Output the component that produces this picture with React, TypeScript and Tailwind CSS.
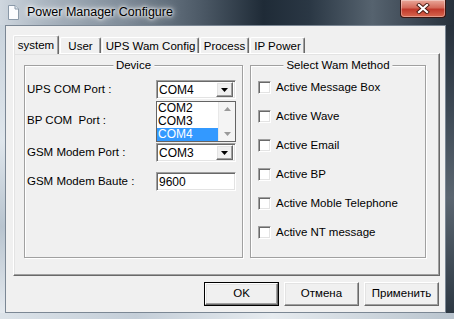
import React from "react";

const raised =
  "border border-t-white border-l-white border-b-[#696969] border-r-[#696969] shadow-[inset_-1px_-1px_0_#a0a0a0,inset_1px_1px_0_#e3e3e3] bg-[#f0f0f0]";
const sunken =
  "border border-t-[#a0a0a0] border-l-[#a0a0a0] border-b-white border-r-white shadow-[inset_1px_1px_0_#696969,inset_-1px_-1px_0_#e3e3e3] bg-white";

function Arrow({ color = "#000" }: { color?: string }) {
  return (
    <svg width="7" height="4" viewBox="0 0 7 4">
      <path d="M0 0H7L3.5 4Z" fill={color} />
    </svg>
  );
}

function Combo({ value }: { value: string }) {
  return (
    <div className={`${sunken} w-[80px] h-[19px] flex items-center pl-[2px] pr-[2px]`}>
      <span className="flex-1 text-[12px] leading-none text-black">{value}</span>
      <div className={`${raised} w-[17px] h-[15px] flex items-center justify-center`}>
        <Arrow />
      </div>
    </div>
  );
}

function Check({ label }: { label: string }) {
  return (
    <div className="flex items-center h-[13px]">
      <div className={`${sunken} w-[13px] h-[13px]`} />
      <span className="ml-[5px] text-[11.5px] leading-none text-black">{label}</span>
    </div>
  );
}

function Group({ title, className, children }: { title: string; className: string; children?: React.ReactNode }) {
  return (
    <div className={`relative border border-[#a0a0a0] shadow-[inset_1px_1px_0_#fff,1px_1px_0_#fff] ${className}`}>
      <span className="absolute left-1/2 -translate-x-1/2 -top-[8px] px-[3px] bg-[#f0f0f0] text-[11.5px] leading-[14px] text-black whitespace-nowrap">
        {title}
      </span>
      {children}
    </div>
  );
}

function Btn({ label, def }: { label: string; def?: boolean }) {
  if (def) {
    return (
      <div className="w-[75px] h-[24px] border border-black flex">
        <div className={`${raised} flex-1 flex items-center justify-center text-[11.5px] text-black`}>{label}</div>
      </div>
    );
  }
  return (
    <div className={`${raised} w-[75px] h-[24px] flex items-center justify-center text-[11.5px] text-black`}>{label}</div>
  );
}

export default function App() {
  const tabs = [
    { label: "User", w: "w-[41px]" },
    { label: "UPS Wam Config", w: "w-[97px]" },
    { label: "Process", w: "w-[49px]" },
    { label: "IP Power", w: "w-[55px]" },
  ];
  return (
    <div className="w-[454px] h-[319px] overflow-hidden flex flex-col font-['Liberation_Sans',Arial,sans-serif] bg-[#3a4654]">
      {/* title bar */}
      <div className="h-[25px] flex items-start bg-[linear-gradient(90deg,#cfd7df_0%,#aab5c0_10%,#7d8a97_28%,#4a5764_45%,#1f2b37_58%,#2a3744_68%,#56636f_82%,#3b4652_92%,#27313c_100%)]">
        <svg className="ml-[8px] mt-[5px]" width="11" height="15" viewBox="0 0 11 15">
          <path d="M0.5 0.5H7L10.5 4V14.5H0.5Z" fill="#fbfcfe" stroke="#8a99a8" />
          <path d="M7 0.5V4H10.5" fill="#dfe6ee" stroke="#8a99a8" />
        </svg>
        <span className="ml-[8px] mt-[5px] text-[12.5px] leading-[15px] text-black [text-shadow:0_0_5px_#fff,0_0_8px_#fff,0_0_3px_#fff]">
          Power Manager Configure
        </span>
        <div className="ml-auto mr-[8px] w-[46px] h-[18px] rounded-b-[4px] border border-[#3b1510] border-t-0 bg-[linear-gradient(180deg,#e9a89a_0%,#d46a5a_45%,#c0392b_55%,#d8674f_100%)] shadow-[inset_0_0_0_1px_rgba(255,255,255,0.35)] flex items-center justify-center">
          <svg width="14" height="11" viewBox="0 0 14 11">
            <path d="M3 2L11 9M11 2L3 9" stroke="#4a1a12" strokeWidth="4" strokeLinecap="square" />
            <path d="M3 2L11 9M11 2L3 9" stroke="#fff" strokeWidth="2.2" strokeLinecap="square" />
          </svg>
        </div>
      </div>

      {/* middle */}
      <div className="h-[288px] flex">
        <div className="w-[5px] bg-[linear-gradient(180deg,#c9d3dc,#dfe6ec_40%,#b8c4cf_70%,#e4e9ee)]" />
        <div className="w-[441px] h-[288px] border border-[#7b8794] bg-[#f0f0f0] pl-[7px] pt-[9px]">
          {/* tab strip */}
          <div className="h-[18px] flex items-end">
            <div className="relative z-10 w-[46px] h-[19px] -mb-[1px] bg-[#f0f0f0] border-l border-t border-r border-l-white border-t-white border-r-[#696969] rounded-t-[2px] shadow-[inset_-1px_0_0_#a0a0a0,inset_1px_1px_0_#e3e3e3] flex items-start justify-center pt-[3px] text-[11.5px] leading-[13px] text-black">
              system
            </div>
            {tabs.map((t) => (
              <div
                key={t.label}
                className={`${t.w} h-[16px] ml-[1px] first:ml-0 bg-[#f0f0f0] border-l border-t border-r border-l-white border-t-white border-r-[#696969] rounded-t-[2px] shadow-[inset_-1px_0_0_#a0a0a0] flex items-start justify-center pt-[2px] text-[11.5px] leading-[13px] text-black whitespace-nowrap`}
              >
                {t.label}
              </div>
            ))}
          </div>
          {/* panel */}
          <div className="w-[427px] h-[223px] border border-t-white border-l-white border-b-[#696969] border-r-[#696969] shadow-[inset_-1px_-1px_0_#a0a0a0,inset_1px_1px_0_#e3e3e3] flex gap-[7px] pl-[10px] pt-[11px]">
            <Group title="Device" className="w-[219px] h-[193px]">
              <div className="flex flex-col pl-[2px] pt-[14px] text-[11.5px] text-black">
                <div className="flex items-center h-[19px]">
                  <span className="w-[129px]">UPS COM Port :</span>
                  <Combo value="COM4" />
                </div>
                <div className="flex items-center h-[19px] mt-[12px]">
                  <span className="w-[129px] whitespace-pre">BP COM  Port :</span>
                  <Combo value="COM2" />
                </div>
                <div className="flex items-center h-[19px] mt-[13px]">
                  <span className="w-[129px]">GSM Modem Port :</span>
                  <Combo value="COM3" />
                </div>
                <div className="flex items-center h-[19px] mt-[10px]">
                  <span className="w-[129px]">GSM Modem Baute :</span>
                  <div className={`${sunken} w-[80px] h-[19px] flex items-center pl-[2px] text-[12px] leading-none`}>9600</div>
                </div>
              </div>
              {/* open drop-down list */}
              <div className="absolute left-[131px] top-[35px] w-[80px] h-[41px] border border-[#646464] bg-white flex z-20">
                <div className="flex-1 flex flex-col text-[12px] leading-[13px]">
                  <div className="h-[13px] pl-[1px]">COM2</div>
                  <div className="h-[13px] pl-[1px]">COM3</div>
                  <div className="h-[13px] pl-[1px] bg-[#3399ff] text-white">COM4</div>
                </div>
                <div className="w-[17px] bg-[#f4f4f4] border-l border-[#e8e8e8] flex flex-col items-center justify-between py-[5px]">
                  <svg width="7" height="4" viewBox="0 0 7 4">
                    <path d="M0 4H7L3.5 0Z" fill="#9a9a9a" />
                  </svg>
                  <Arrow color="#9a9a9a" />
                </div>
              </div>
            </Group>
            <Group title="Select Wam Method" className="w-[176px] h-[193px]">
              <div className="flex flex-col gap-[16px] pl-[7px] pt-[15px]">
                <Check label="Active Message Box" />
                <Check label="Active Wave" />
                <Check label="Active Email" />
                <Check label="Active BP" />
                <Check label="Active Moble Telephone" />
                <Check label="Active NT message" />
              </div>
            </Group>
          </div>
          {/* buttons */}
          <div className="w-[427px] mt-[6px] flex justify-end gap-[5px] pr-[1px]">
            <Btn label="OK" def />
            <Btn label="Отмена" />
            <Btn label="Применить" />
          </div>
        </div>
        <div className="w-[8px] bg-[linear-gradient(180deg,#27313c,#3e4a56_30%,#5b6671_60%,#2d3843_100%)]" />
      </div>
      <div className="h-[6px] bg-[linear-gradient(90deg,#dce3e9,#c4ced8_30%,#e6ebef_60%,#b9c4ce_100%)]" />
    </div>
  );
}
